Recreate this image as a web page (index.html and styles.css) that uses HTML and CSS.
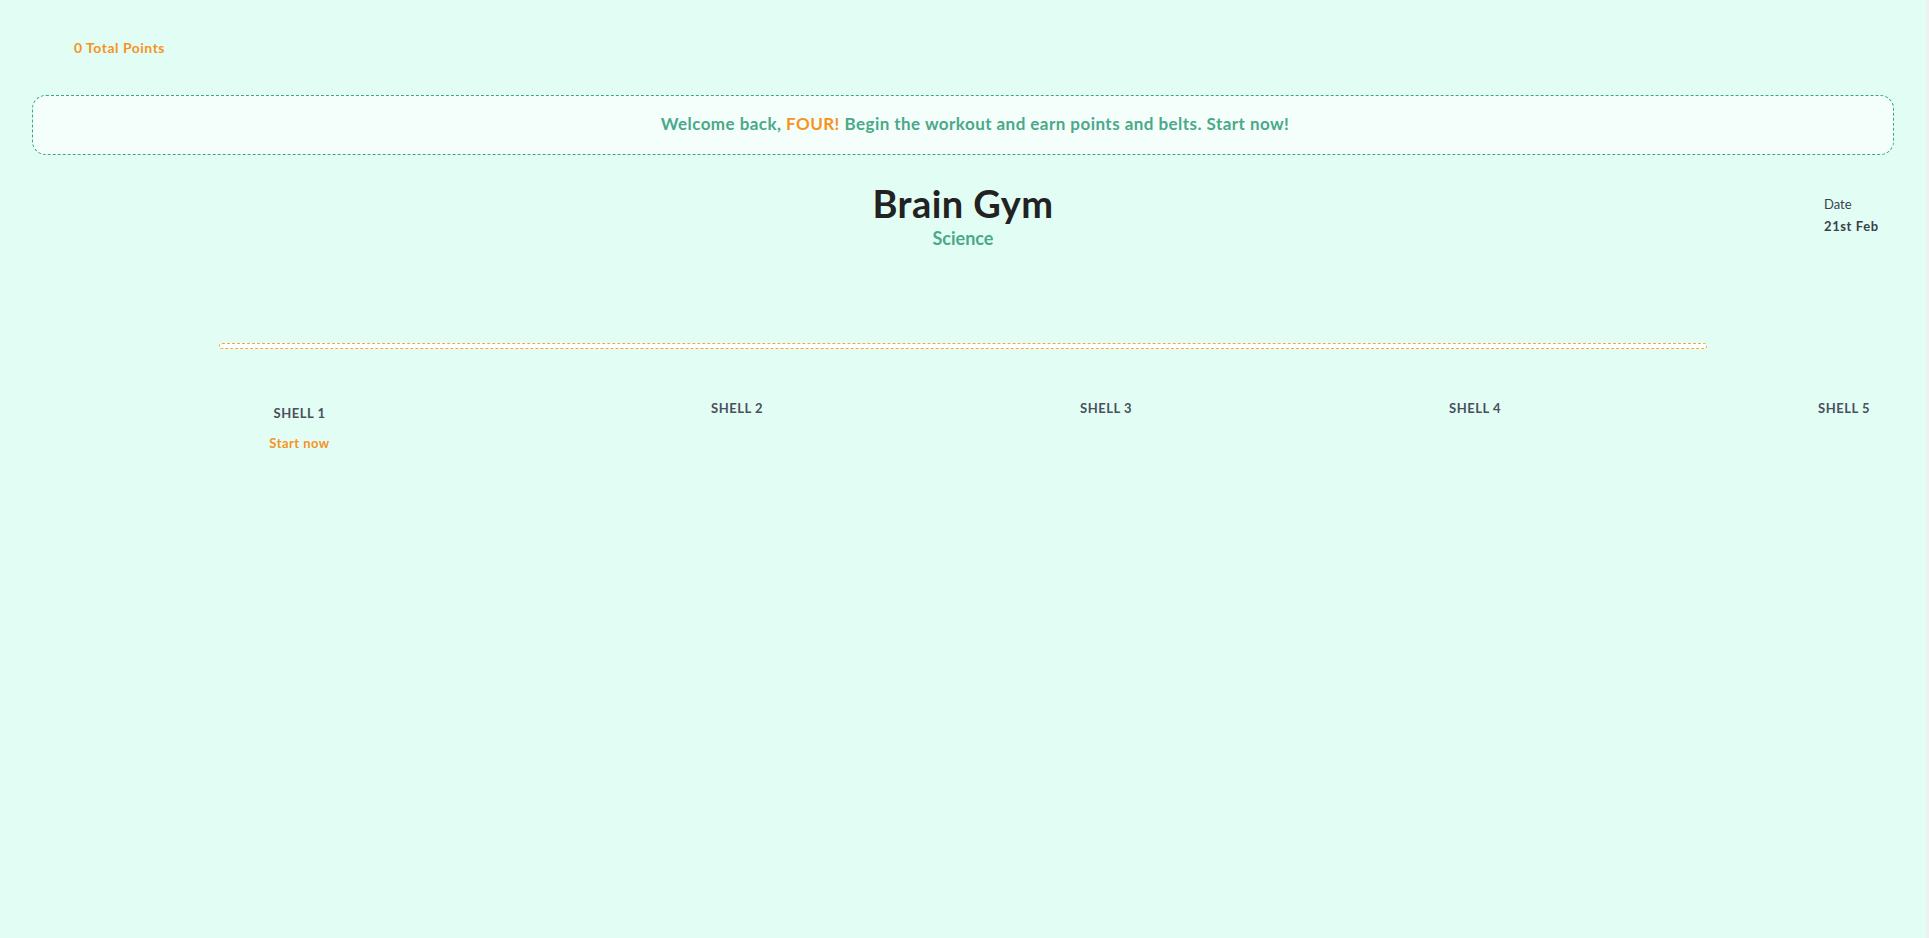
FILE: index.html
```html
<!DOCTYPE html>
<html lang="en">
<head>
<meta charset="utf-8">
<title>Brain Gym</title>
<link rel="stylesheet" href="styles.css">
</head>
<body>
<div class="page">
  <div class="points">0 Total Points</div>

  <div class="banner">
    <p class="banner-text">Welcome back, <span class="accent">FOUR!</span> Begin the workout and earn points and belts. Start now!</p>
  </div>

  <div class="heading">
    <div class="heading-spacer"></div>
    <div class="heading-main">
      <h1 class="title">Brain Gym</h1>
      <div class="subject">Science</div>
    </div>
    <div class="date">
      <div class="date-label">Date</div>
      <div class="date-value">21st Feb</div>
    </div>
  </div>

  <div class="progress"></div>

  <div class="shells">
    <div class="shell shell-first">
      <div class="shell-name">SHELL 1</div>
      <div class="shell-action">Start now</div>
    </div>
    <div class="shell"><div class="shell-name">SHELL 2</div></div>
    <div class="shell"><div class="shell-name">SHELL 3</div></div>
    <div class="shell"><div class="shell-name">SHELL 4</div></div>
    <div class="shell"><div class="shell-name">SHELL 5</div></div>
  </div>
</div>
</body>
</html>
```

FILE: styles.css
```css
html {
  background: #f0f0f0;
}

body {
  margin: 0;
  font-family: Lato, "Open Sans", "Liberation Sans", sans-serif;
}

.page {
  width: calc(100% - 3px);
  min-height: 100vh;
  background: #e2fef4;
  box-sizing: border-box;
  padding-top: 39px;
}

.points {
  padding-left: 74px;
  font-size: 14px;
  font-weight: 700;
  letter-spacing: 0.5px;
  color: #f7931e;
}

.banner {
  margin: 39px 32px 0;
  height: 60px;
  box-sizing: border-box;
  padding: 0 0 4px 24px;
  border: 1px dashed #3aa786;
  border-radius: 14px;
  background: #f4fffb;
  display: flex;
  align-items: center;
  justify-content: center;
}

.banner-text {
  margin: 0;
  font-size: 17px;
  font-weight: 700;
  letter-spacing: 0.45px;
  color: #4ba88a;
}

.accent {
  color: #f7931e;
}

.heading {
  display: grid;
  grid-template-columns: 1fr auto 1fr;
  margin-top: 25px;
}

.heading-main {
  text-align: center;
}

.title {
  margin: 0;
  font-size: 38px;
  font-weight: 700;
  letter-spacing: 0.45px;
  color: #222222;
}

.subject {
  margin-top: 1px;
  font-size: 18px;
  font-weight: 700;
  color: #4ba88a;
}

.date {
  justify-self: end;
  width: 70px;
  margin-right: 32px;
  padding-top: 16px;
  color: #3a3f4c;
  font-size: 13px;
}

.date-value {
  margin-top: 6px;
  font-weight: 700;
  letter-spacing: 0.6px;
}

.progress {
  margin: 94px 219px 0;
  height: 6px;
  box-sizing: border-box;
  border: 1px dashed #f5a83a;
  border-radius: 3px;
  background: #ffffff;
}

.shells {
  display: grid;
  grid-template-columns: 189px repeat(4, 369px);
  padding-left: 205px;
  margin-top: 51px;
  align-items: start;
}

.shell {
  text-align: right;
}

.shell-first {
  text-align: center;
  padding-top: 5px;
}

.shell-name {
  font-size: 13px;
  font-weight: 700;
  letter-spacing: 0.5px;
  color: #4a4f5c;
}

.shell-action {
  margin-top: 14px;
  font-size: 13px;
  font-weight: 700;
  letter-spacing: 0.45px;
  color: #f7931e;
}
```
